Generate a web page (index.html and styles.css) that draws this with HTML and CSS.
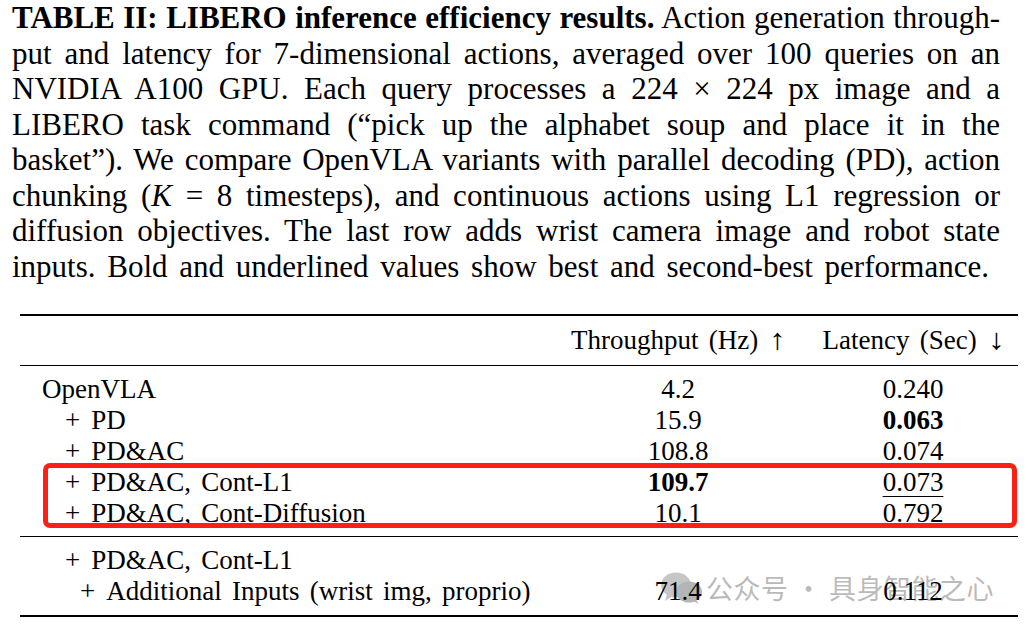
FILE: index.html
```html
<!DOCTYPE html>
<html lang="en">
<head>
<meta charset="utf-8">
<title>TABLE II: LIBERO inference efficiency results</title>
<link rel="stylesheet" href="styles.css">
</head>
<body>
<div class="page">
  <p class="caption">
    <span class="ln"><b>TABLE II: LIBERO inference efficiency results.</b> Action generation through-</span>
    <span class="ln">put and latency for 7-dimensional actions, averaged over 100 queries on an</span>
    <span class="ln">NVIDIA A100 GPU. Each query processes a 224 × 224 px image and a</span>
    <span class="ln">LIBERO task command (“pick up the alphabet soup and place it in the</span>
    <span class="ln">basket”). We compare OpenVLA variants with parallel decoding (PD), action</span>
    <span class="ln">chunking (<i>K</i> = 8 timesteps), and continuous actions using L1 regression or</span>
    <span class="ln">diffusion objectives. The last row adds wrist camera image and robot state</span>
    <span class="ln last">inputs. Bold and underlined values show best and second-best performance.</span>
  </p>

  <div class="table-wrap">
    <table class="results">
      <colgroup>
        <col class="c-name">
        <col class="c-thr">
        <col class="c-lat">
      </colgroup>
      <thead>
        <tr>
          <th class="name"></th>
          <th>Throughput (Hz) <span class="arrow">↑</span></th>
          <th>Latency (Sec) <span class="arrow">↓</span></th>
        </tr>
      </thead>
      <tbody class="g1">
        <tr>
          <td class="name">OpenVLA</td>
          <td>4.2</td>
          <td>0.240</td>
        </tr>
        <tr>
          <td class="name sub"><span class="plus">+</span>PD</td>
          <td>15.9</td>
          <td><b>0.063</b></td>
        </tr>
        <tr>
          <td class="name sub"><span class="plus">+</span>PD&amp;AC</td>
          <td><span class="second">108.8</span></td>
          <td>0.074</td>
        </tr>
        <tr>
          <td class="name sub"><span class="plus">+</span>PD&amp;AC, Cont-L1</td>
          <td><b>109.7</b></td>
          <td><span class="second">0.073</span></td>
        </tr>
        <tr>
          <td class="name sub"><span class="plus">+</span>PD&amp;AC, Cont-Diffusion</td>
          <td>10.1</td>
          <td>0.792</td>
        </tr>
      </tbody>
      <tbody class="g2">
        <tr>
          <td class="name sub"><span class="plus">+</span>PD&amp;AC, Cont-L1</td>
          <td></td>
          <td></td>
        </tr>
        <tr>
          <td class="name subsub"><span class="plus">+</span>Additional Inputs (wrist img, proprio)</td>
          <td>71.4</td>
          <td>0.112</td>
        </tr>
      </tbody>
    </table>

    <div class="highlight"></div>

    <div class="watermark">
      <svg class="wm-icon" width="44" height="34" viewBox="0 0 44 34" aria-hidden="true">
        <ellipse cx="16" cy="14" rx="15" ry="12.5" fill="#bdbdbd"/>
        <path d="M7 23 L5 30 L13 25 Z" fill="#bdbdbd"/>
        <ellipse cx="29" cy="21" rx="13" ry="10.5" fill="#a9a9a9"/>
        <path d="M36 29 L39 33 L33 30 Z" fill="#a9a9a9"/>
      </svg>
      <span class="wm-text">公众号 · 具身智能之心</span>
    </div>
  </div>
</div>
</body>
</html>
```

FILE: styles.css
```css
html, body {
  margin: 0;
  padding: 0;
  background: #ffffff;
}

.page {
  width: 1028px;
  height: 634px;
  overflow: hidden;
  font-family: "Liberation Serif", "Times New Roman", serif;
  color: #000;
}

.caption {
  margin: 0 0 0 12px;
  padding-top: 0;
  width: 988px;
  font-size: 31px;
  line-height: 35.5px;
}

.caption .ln {
  display: block;
  text-align: justify;
  text-align-last: justify;
  white-space: nowrap;
}

.caption .ln.last {
  text-align: left;
  text-align-last: left;
  word-spacing: 4px;
}

.caption b {
  font-weight: bold;
}

.table-wrap {
  position: relative;
  margin: 30px 0 0 20px;
  width: 998px;
}

.results {
  position: relative;
  z-index: 1;
  width: 998px;
  border-collapse: collapse;
  font-size: 27px;
  line-height: 31px;
  word-spacing: 3.5px;
  table-layout: fixed;
}

.c-name { width: 528px; }
.c-thr { width: 260px; }
.c-lat { width: 210px; }

.results th,
.results td {
  padding: 0;
  text-align: center;
  font-weight: normal;
  white-space: nowrap;
}

.results thead tr {
  border-top: 2px solid #000;
  border-bottom: 1.4px solid #000;
}

.results thead th {
  padding-top: 8px;
  padding-bottom: 9px;
}

.arrow {
  display: inline-block;
  margin-left: 2px;
  font-size: 29px;
  transform: scaleX(1.15);
}

.results .name {
  text-align: left;
  padding-left: 22px;
}

.results .name.sub {
  padding-left: 45px;
}

.results .name.subsub {
  padding-left: 60px;
}

.plus {
  display: inline-block;
  margin-right: 11px;
}

.results tbody.g1 tr:first-child td {
  padding-top: 8px;
}

.results tbody.g1 tr:last-child td {
  padding-bottom: 7px;
}

.results tbody.g1 {
  border-bottom: 1px solid #000;
}

.results tbody.g2 tr:first-child td {
  padding-top: 8px;
}

.results tbody.g2 tr:last-child td {
  padding-bottom: 8px;
}

.results tbody.g2 {
  border-bottom: 2.5px solid #000;
}

.results b {
  font-weight: bold;
}

.second {
  text-decoration: underline;
  text-decoration-thickness: 1px;
  text-underline-offset: 5px;
}

.highlight {
  position: absolute;
  z-index: 2;
  left: 23px;
  top: 149px;
  width: 964px;
  height: 55px;
  border: 5px solid #ff1f14;
  border-radius: 7px;
  pointer-events: none;
}

.watermark {
  position: absolute;
  z-index: 0;
  left: 640px;
  top: 257px;
  display: flex;
  align-items: center;
  gap: 2px;
  pointer-events: none;
}

.wm-icon {
  display: block;
  opacity: 0.85;
}

.wm-text {
  font-family: "Noto Sans CJK SC", "Noto Sans", sans-serif;
  font-size: 27px;
  line-height: 34px;
  color: rgba(160, 160, 160, 0.72);
  letter-spacing: 0.5px;
}
```
